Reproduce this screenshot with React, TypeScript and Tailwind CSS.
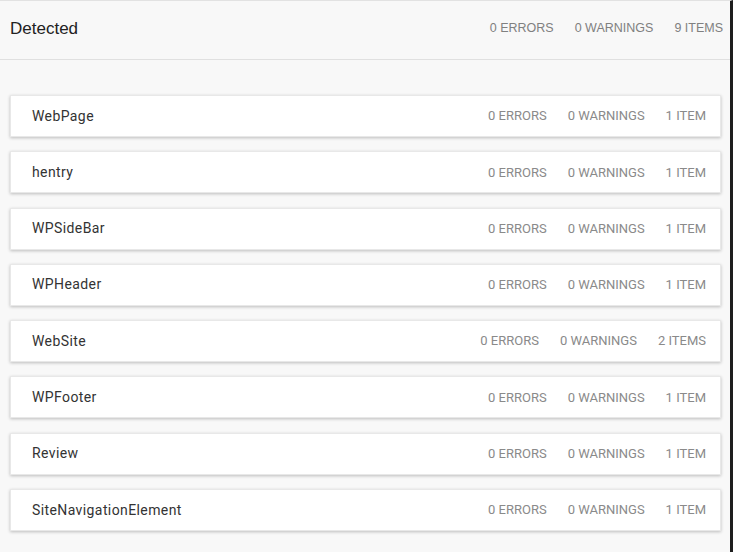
type Entity = {
  name: string;
  errors: number;
  warnings: number;
  items: number;
};

const entities: Entity[] = [
  { name: "WebPage", errors: 0, warnings: 0, items: 1 },
  { name: "hentry", errors: 0, warnings: 0, items: 1 },
  { name: "WPSideBar", errors: 0, warnings: 0, items: 1 },
  { name: "WPHeader", errors: 0, warnings: 0, items: 1 },
  { name: "WebSite", errors: 0, warnings: 0, items: 2 },
  { name: "WPFooter", errors: 0, warnings: 0, items: 1 },
  { name: "Review", errors: 0, warnings: 0, items: 1 },
  { name: "SiteNavigationElement", errors: 0, warnings: 0, items: 1 },
];

const plural = (n: number, word: string) => `${n} ${word}${n === 1 ? "" : "S"}`;

function EntityRow({ entity }: { entity: Entity }) {
  return (
    <div className="h-[42px] bg-white border border-[#e8e8e8] shadow-[0_1px_3px_rgba(0,0,0,0.24)] flex items-center justify-between pl-[21px] pr-[14px] font-['Roboto',sans-serif]">
      <span className="text-[14px] tracking-[0.4px] text-[#333]">{entity.name}</span>
      <div className="flex items-center gap-[21px] text-[13px] text-[#8a8a8a]">
        <span>{entity.errors} ERRORS</span>
        <span>{entity.warnings} WARNINGS</span>
        <span>{plural(entity.items, "ITEM")}</span>
      </div>
    </div>
  );
}

export default function App() {
  const total = entities.length + 1;
  return (
    <div className="w-[733px] h-[552px] overflow-hidden bg-[#f8f8f8] border-t border-t-[#e2e2e2] border-r-[3px] border-r-[#1e1e1e]">
      <div className="h-[59px] flex items-center justify-between pl-[10px] pr-[7px] pb-[3px] border-b border-[#e0e0e0] font-['Liberation_Sans',Arial,sans-serif]">
        <h2 className="text-[17px] text-[#222]">Detected</h2>
        <div className="flex items-center gap-[21px] text-[12.5px] text-[#808080]">
          <span>0 ERRORS</span>
          <span>0 WARNINGS</span>
          <span>{total} ITEMS</span>
        </div>
      </div>
      <div className="flex flex-col gap-[14.3px] pl-[10px] pr-[9px] pt-[35px]">
        {entities.map((e) => (
          <EntityRow key={e.name} entity={e} />
        ))}
      </div>
    </div>
  );
}
